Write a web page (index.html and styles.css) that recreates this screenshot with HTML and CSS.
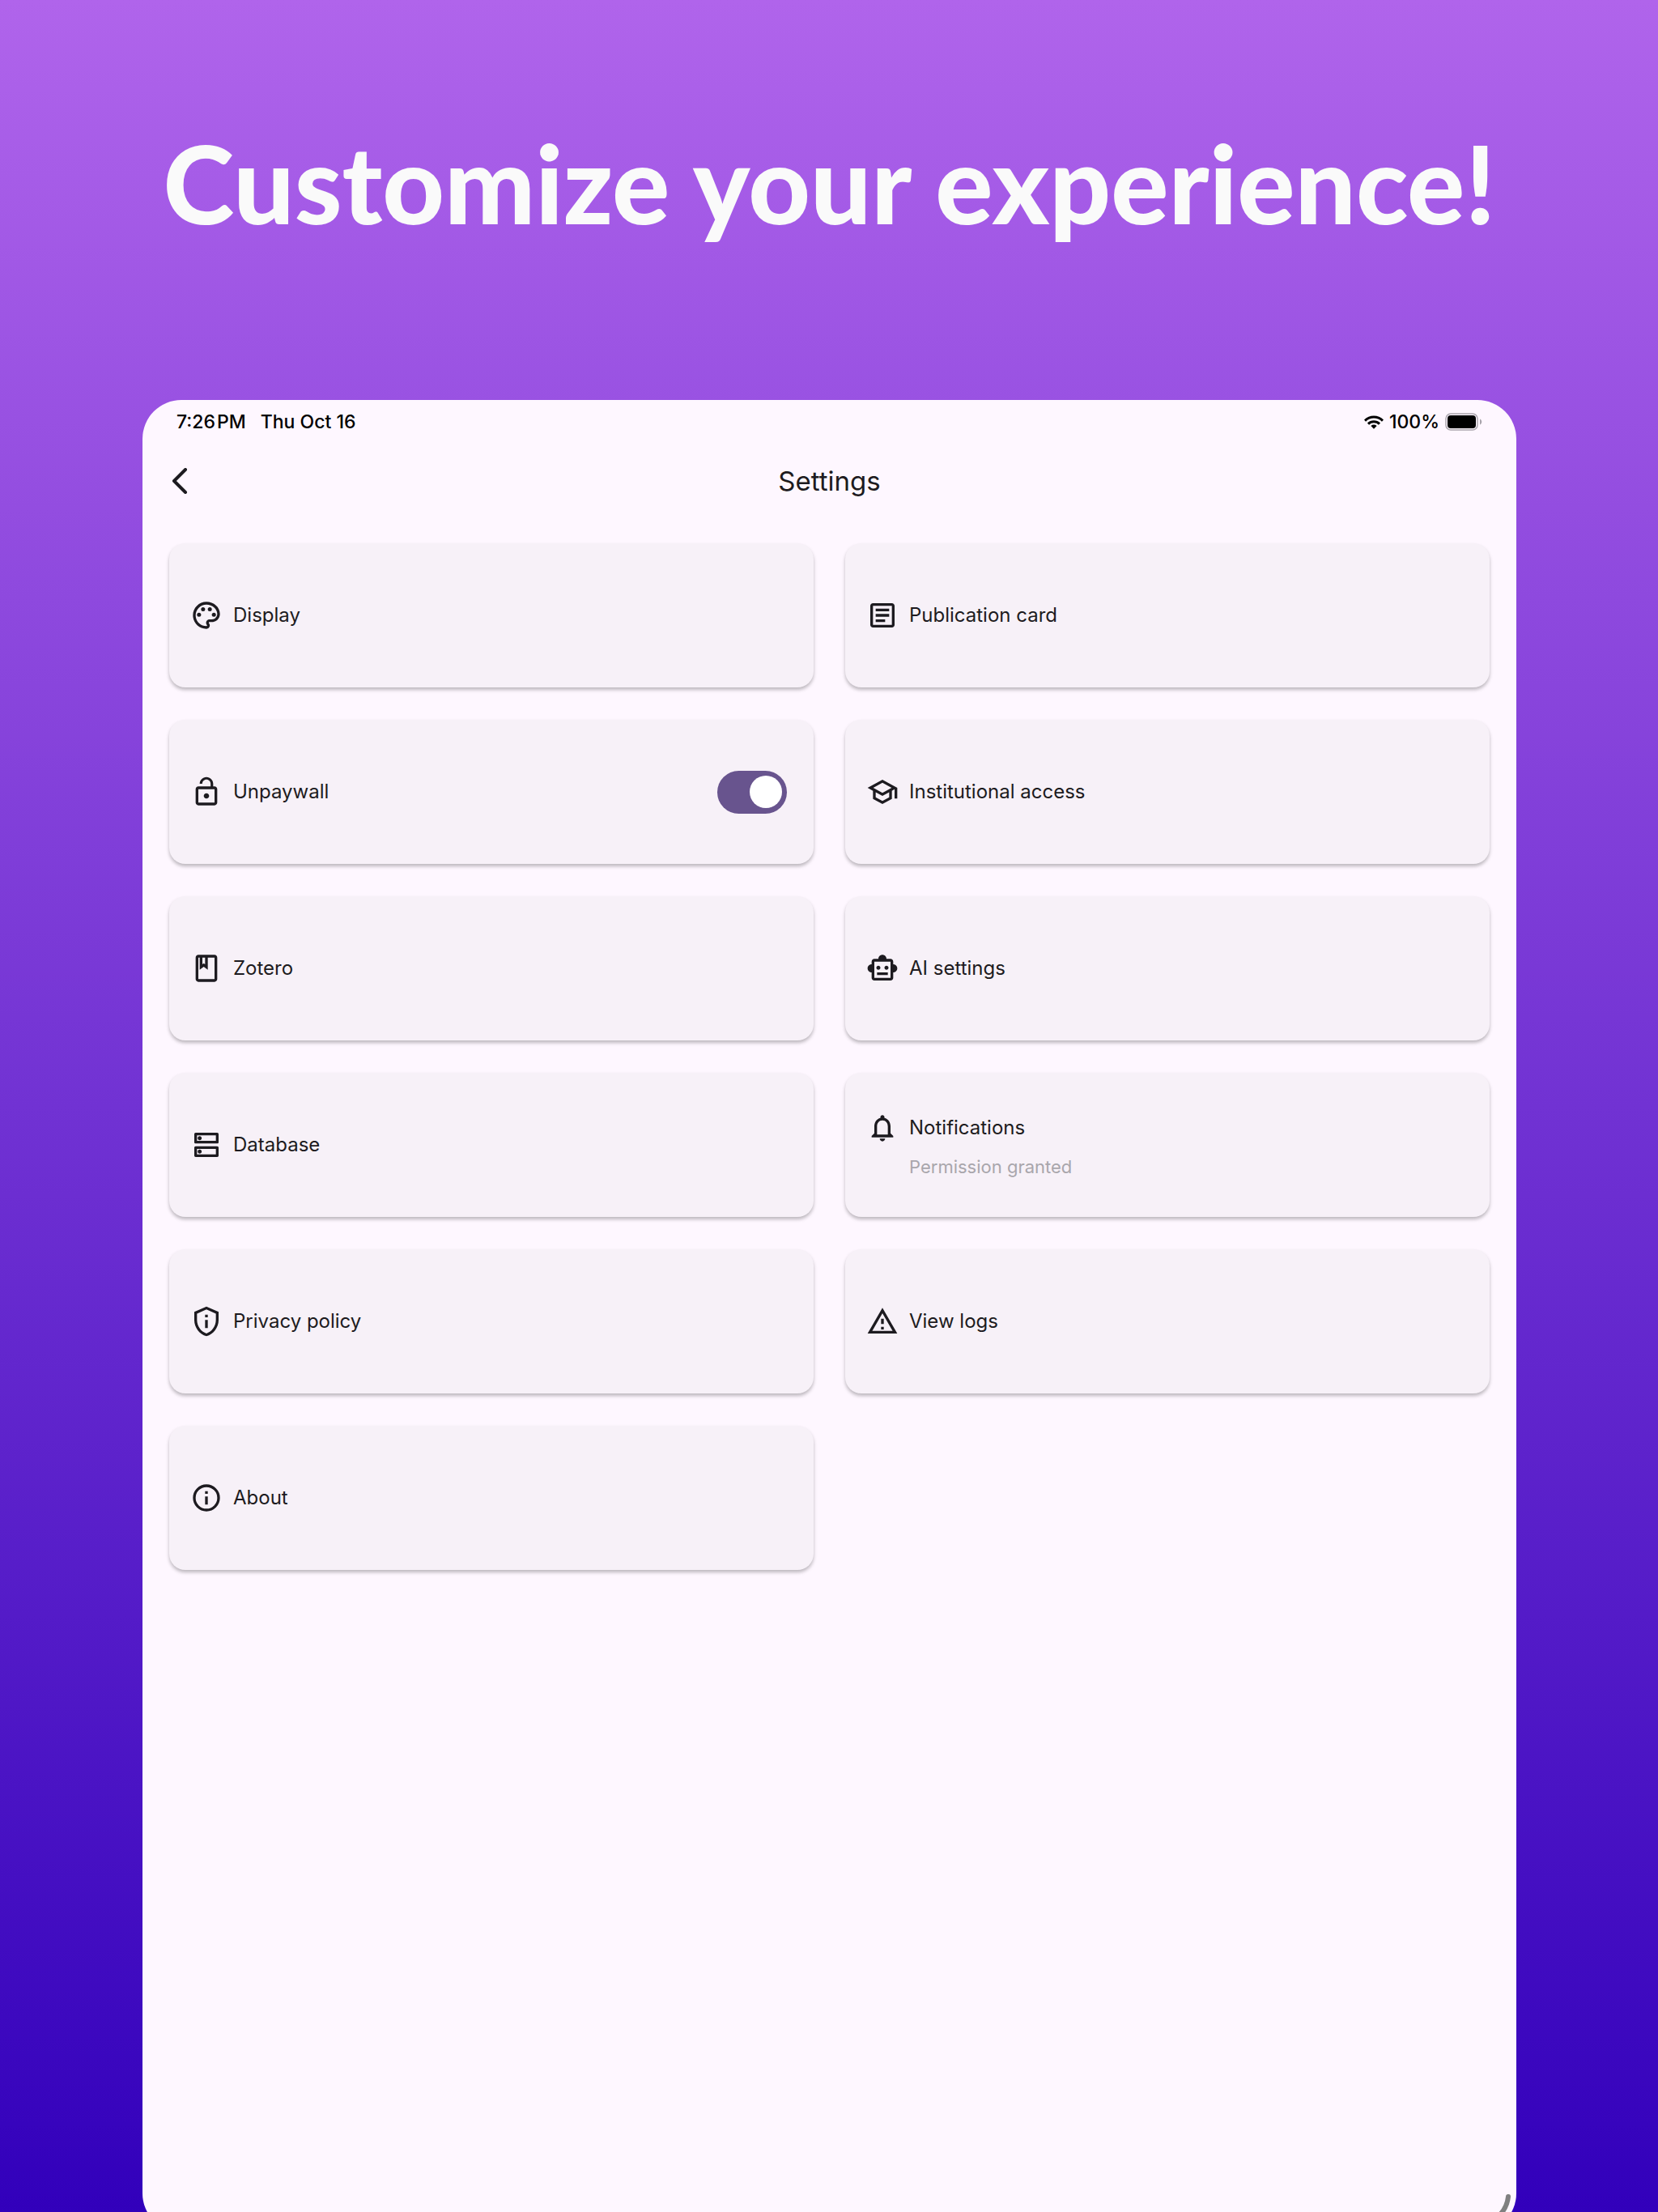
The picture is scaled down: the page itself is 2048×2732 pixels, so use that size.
FILE: index.html
```html
<!DOCTYPE html>
<html lang="en">
<head>
<meta charset="utf-8">
<meta name="viewport" content="width=device-width, initial-scale=1">
<title>Settings</title>
<link rel="stylesheet" href="styles.css">
</head>
<body>
<div class="stage">
  <h1 class="headline">Customize your experience!</h1>
  <main class="tablet">
    <div class="status">
      <div class="status-group status-left"><span>7:26&#8202;PM</span><span>Thu Oct 16</span></div>
      <div class="status-group">
        <svg class="wifi" viewBox="0 0 24 17" aria-hidden="true">
          <g fill="none" stroke="currentColor" stroke-width="3"><path d="M1 6.6a15.6 15.6 0 0 1 22 0"/><path d="M5 10.6a10 10 0 0 1 14 0"/></g>
          <path d="M8.4 13a5.2 5.2 0 0 1 7.2 0L12 16.8z"/>
        </svg>
        <span>100%</span>
        <svg class="battery" viewBox="0 0 46 22" aria-hidden="true">
          <rect x="1" y="1" width="39" height="20" rx="6" fill="none" stroke="#a9a4ac" stroke-width="1.5"/>
          <rect x="3" y="3" width="35" height="16" rx="4"/>
          <path d="M43 7.5c3 1.200 3 5.800 0 7z" fill="#a9a4ac"/>
        </svg>
      </div>
    </div>
    <header class="appbar">
      <button class="back" type="button" aria-label="Back">
        <svg viewBox="0 0 20 32" aria-hidden="true"><path d="M17 2 3 16l14 14" fill="none" stroke="currentColor" stroke-width="4" stroke-linecap="round" stroke-linejoin="round"/></svg>
      </button>
      <h2 class="title">Settings</h2>
    </header>
    <div class="grid">
      <button class="card" type="button">
        <svg class="icon" viewBox="0 0 24 24" aria-hidden="true"><path d="M12 22C6.490 22 2 17.510 2 12S6.490 2 12 2s10 4.040 10 9c0 3.310-2.690 6-6 6h-1.770c-.28 0-.5.22-.5.5 0 .12.05.23.13.33.41.47.64 1.060.64 1.670 0 1.380-1.120 2.500-2.500 2.500zm0-18c-4.410 0-8 3.590-8 8s3.590 8 8 8c.28 0 .5-.22.5-.5 0-.16-.08-.28-.14-.35-.41-.46-.63-1.050-.63-1.650 0-1.380 1.120-2.500 2.500-2.500H16c2.210 0 4-1.790 4-4 0-3.860-3.590-7-8-7z"/><circle cx="6.500" cy="11.500" r="1.500"/><circle cx="9.500" cy="7.500" r="1.500"/><circle cx="14.500" cy="7.500" r="1.500"/><circle cx="17.500" cy="11.500" r="1.500"/></svg>
        <span class="label">Display</span>
      </button>
      <button class="card" type="button">
        <svg class="icon" viewBox="0 0 24 24" aria-hidden="true"><path d="M19 5v14H5V5h14m0-2H5c-1.100 0-2 .9-2 2v14c0 1.100.9 2 2 2h14c1.100 0 2-.9 2-2V5c0-1.100-.9-2-2-2zM14 17H7v-2h7v2zm3-4H7v-2h10v2zm0-4H7V7h10v2z"/></svg>
        <span class="label">Publication card</span>
      </button>
      <label class="card">
        <svg class="icon" viewBox="0 0 24 24" aria-hidden="true"><path d="M18 8h-1V6c0-2.760-2.240-5-5-5S7 3.240 7 6h1.900c0-1.710 1.390-3.100 3.100-3.100 1.710 0 3.100 1.390 3.100 3.100v2H6c-1.100 0-2 .9-2 2v10c0 1.100.9 2 2 2h12c1.100 0 2-.9 2-2V10c0-1.100-.9-2-2-2zm0 12H6V10h12v10zm-6-3c1.100 0 2-.9 2-2s-.9-2-2-2-2 .9-2 2 .9 2 2 2z"/></svg>
        <span class="label">Unpaywall</span>
        <input class="switch" type="checkbox" role="switch" checked>
      </label>
      <button class="card" type="button">
        <svg class="icon" viewBox="0 0 24 24" aria-hidden="true"><path d="M12 3 1 9l4 2.180v6L12 21l7-3.820v-6l2-1.090V17h2V9L12 3zm6.820 6L12 12.720 5.180 9 12 5.280 18.820 9zM17 15.990l-5 2.730-5-2.730v-3.720L12 15l5-2.730v3.720z"/></svg>
        <span class="label">Institutional access</span>
      </button>
      <button class="card" type="button">
        <svg class="icon" viewBox="0 0 24 24" aria-hidden="true"><path d="M18 2H6c-1.100 0-2 .9-2 2v16c0 1.100.9 2 2 2h12c1.100 0 2-.9 2-2V4c0-1.100-.9-2-2-2zM9 4h2v5l-1-.75L9 9V4zm9 16H6V4h1v9l3-2.250L13 13V4h5v16z"/></svg>
        <span class="label">Zotero</span>
      </button>
      <button class="card" type="button">
        <svg class="icon" viewBox="0 0 24 24" aria-hidden="true"><path d="M20 9V7c0-1.100-.9-2-2-2h-3c0-1.660-1.340-3-3-3S9 3.340 9 5H6c-1.100 0-2 .9-2 2v2c-1.660 0-3 1.340-3 3s1.340 3 3 3v4c0 1.100.9 2 2 2h12c1.100 0 2-.9 2-2v-4c1.660 0 3-1.340 3-3s-1.340-3-3-3zm-2 10H6V7h12v12zm-9-6c-.83 0-1.500-.67-1.500-1.500S8.170 10 9 10s1.500.67 1.500 1.500S9.830 13 9 13zm7.500-1.500c0 .83-.67 1.500-1.500 1.500s-1.500-.67-1.500-1.500.67-1.500 1.500-1.500 1.500.67 1.500 1.500zM8 15h8v2H8v-2z"/></svg>
        <span class="label">AI settings</span>
      </button>
      <button class="card" type="button">
        <svg class="icon" viewBox="0 0 24 24" aria-hidden="true"><path d="M19 15v4H5v-4h14m1-2H4c-.55 0-1 .45-1 1v6c0 .55.45 1 1 1h16c.55 0 1-.45 1-1v-6c0-.55-.45-1-1-1zM7 18.500c-.82 0-1.500-.67-1.500-1.500s.68-1.500 1.500-1.500 1.500.67 1.500 1.500-.67 1.500-1.500 1.500zM19 5v4H5V5h14m1-2H4c-.55 0-1 .45-1 1v6c0 .55.45 1 1 1h16c.55 0 1-.45 1-1V4c0-.55-.45-1-1-1zM7 8.500c-.82 0-1.500-.67-1.500-1.500S6.180 5.500 7 5.500s1.500.68 1.500 1.500S7.830 8.500 7 8.500z"/></svg>
        <span class="label">Database</span>
      </button>
      <button class="card" type="button">
        <span class="stack">
          <svg class="icon" viewBox="0 0 24 24" aria-hidden="true"><path d="M12 22c1.100 0 2-.9 2-2h-4c0 1.100.9 2 2 2zm6-6v-5c0-3.070-1.630-5.640-4.500-6.320V4c0-.83-.67-1.500-1.500-1.500s-1.500.67-1.500 1.500v.68C7.640 5.360 6 7.920 6 11v5l-2 2v1h16v-1l-2-2zm-2 1H8v-6c0-2.480 1.510-4.500 4-4.500s4 2.020 4 4.500v6z"/></svg>
          <span class="label">Notifications</span>
          <span class="note">Permission granted</span>
        </span>
      </button>
      <button class="card" type="button">
        <svg class="icon" viewBox="0 0 24 24" aria-hidden="true"><path fill-rule="evenodd" d="M12 1 3 5v6c0 5.550 3.840 10.740 9 12 5.160-1.260 9-6.450 9-12V5l-9-4zm0 2.190 7 3.110V11c0 4.520-2.980 8.690-7 9.930-4.020-1.240-7-5.410-7-9.930V6.300l7-3.110zM11 7h2v2h-2zM11 11h2v6h-2z"/></svg>
        <span class="label">Privacy policy</span>
      </button>
      <button class="card" type="button">
        <svg class="icon" viewBox="0 0 24 24" aria-hidden="true"><path d="M12 5.990 19.530 19H4.470L12 5.990M12 2 1 21h22L12 2zm1 14h-2v2h2v-2zm0-6h-2v4h2v-4z"/></svg>
        <span class="label">View logs</span>
      </button>
      <button class="card" type="button">
        <svg class="icon" viewBox="0 0 24 24" aria-hidden="true"><circle cx="12" cy="12" r="9" fill="none" stroke="currentColor" stroke-width="2"/><path d="M11 7h2v2h-2zM11 11h2v6h-2z"/></svg>
        <span class="label">About</span>
      </button>
    </div>
    <svg class="corner" viewBox="0 0 48 48" aria-hidden="true"><path d="M38 4A38 38 0 0 1 4 38" fill="none" stroke="#808080" stroke-width="6" stroke-linecap="round"/></svg>
  </main>
</div>
</body>
</html>
```
FILE: styles.css
```css
* {
  box-sizing: border-box;
}

body {
  margin: 0;
  font-family: Inter, "Liberation Sans", sans-serif;
  color: #1d1b20;
}

svg {
  display: block;
  fill: currentColor;
}

.stage {
  display: flex;
  flex-direction: column;
  min-height: 100vh;
  padding: 0 175px 0 176px;
  overflow: hidden;
  background: linear-gradient(#b064eb, #3200bb);
}

.headline {
  margin: 0 -100px;
  padding: 146px 0 188px;
  font-family: Lato, sans-serif;
  font-size: 133px;
  font-weight: 900;
  line-height: 160px;
  text-align: center;
  color: #fafafa;
}

/* The tablet runs past the bottom edge of the page. */
.tablet {
  position: relative;
  flex: 1;
  margin-bottom: -25px;
  border-radius: 48px;
  background: #fef7ff;
}

.status {
  display: flex;
  justify-content: space-between;
  padding: 13px 42px 0;
  font-size: 23px;
  font-weight: 500;
  line-height: 28px;
  color: #000;
}

.status-group {
  display: flex;
  align-items: center;
  gap: 7px;
}

.status-left {
  gap: 18px;
}

.wifi {
  width: 24px;
  height: 17px;
}

.battery {
  width: 46px;
  height: 22px;
}

.appbar {
  display: grid;
  grid-template-columns: 40px 1fr 40px;
  align-items: center;
  height: 118px;
  padding: 0 26px;
}

.back {
  display: flex;
  justify-content: center;
  padding: 0;
  border: 0;
  background: none;
  color: inherit;
}

.back svg {
  width: 20px;
  height: 32px;
}

.title {
  margin: 0;
  font-size: 33px;
  font-weight: 400;
  line-height: 44px;
  text-align: center;
}

.grid {
  display: grid;
  grid-template-columns: 1fr 1fr;
  grid-auto-rows: minmax(178px, auto);
  gap: 40px 39px;
  padding: 18px 33px 33px;
}

.card {
  display: flex;
  align-items: center;
  gap: 13px;
  padding: 0 33px 0 26px;
  border: 0;
  border-radius: 20px;
  background: #f7f1f8;
  box-shadow: 0 3px 4px rgba(0, 0, 0, 0.26);
  font: inherit;
  font-size: 24px;
  line-height: 32px;
  text-align: left;
  color: inherit;
}

.icon {
  flex: none;
  width: 40px;
  height: 40px;
}

.label {
  flex: 1;
}

.stack {
  display: grid;
  grid-template-columns: 40px auto;
  align-items: center;
  gap: 14px 13px;
}

.note {
  grid-column: 2;
  font-size: 22px;
  line-height: 28px;
  color: #a9a6ac;
}

.switch {
  appearance: none;
  display: flex;
  justify-content: flex-start;
  align-items: center;
  width: 86px;
  height: 53px;
  margin: 0;
  padding: 0 6px;
  border-radius: 27px;
  background: #cac4d0;
}

.switch::before {
  content: "";
  width: 40px;
  height: 40px;
  border-radius: 50%;
  background: #fff;
}

.switch:checked {
  justify-content: flex-end;
  background: #68548e;
}

.corner {
  position: absolute;
  right: 0;
  bottom: 0;
  width: 48px;
  height: 48px;
}
```
